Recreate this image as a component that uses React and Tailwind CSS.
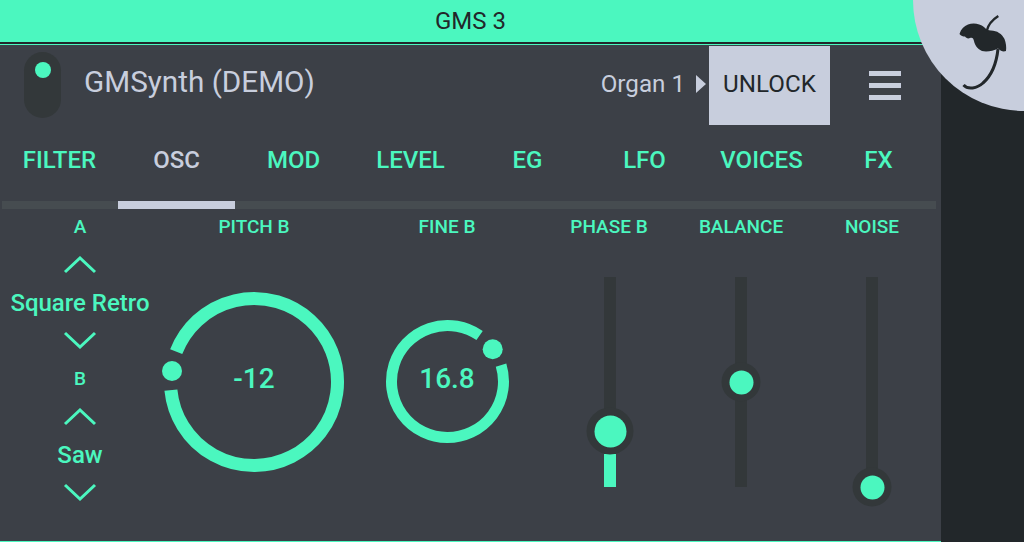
import React from 'react';

const tabs = ['FILTER', 'OSC', 'MOD', 'LEVEL', 'EG', 'LFO', 'VOICES', 'FX'];

function Chevron({ down }) {
  return (
    <svg width="34" height="18" viewBox="0 0 34 18" className="block">
      <path d={down ? 'M2 2L17 16L32 2' : 'M2 16L17 2L32 16'} fill="none" stroke="#4bf7bf" strokeWidth="3" />
    </svg>
  );
}

function Picker({ label, value }) {
  return (
    <div className="flex flex-col items-center">
      <div className="h-[24px] text-[19px] leading-[24px] font-medium">{label}</div>
      <div className="mt-[17px]"><Chevron /></div>
      <div className="mt-[13px] h-[32px] text-[24px] leading-[32px] font-medium whitespace-nowrap">{value}</div>
      <div className="mt-[12px]"><Chevron down /></div>
    </div>
  );
}

function Knob({ size, r, sw, arc, dot, value }) {
  return (
    <div className="relative" style={{ width: size, height: size }}>
      <svg width={size} height={size} viewBox={`0 0 ${size} ${size}`} className="block overflow-visible">
        <path d={arc} fill="none" stroke="#4bf7bf" strokeWidth={sw} />
        <circle cx={dot[0]} cy={dot[1]} r={r} fill="#4bf7bf" />
      </svg>
      <div className="absolute inset-0 flex items-center justify-center pb-[6px] text-[28px] font-medium">{value}</div>
    </div>
  );
}

function Slider({ pos, big, fill }) {
  const outer = big ? 'w-[47px] h-[47px]' : 'w-[39px] h-[39px]';
  const inner = big ? 'w-[32px] h-[32px]' : 'w-[24px] h-[24px]';
  return (
    <div className="relative h-[210px] w-[12px] bg-[#33383a]">
      {fill && <div className="absolute bottom-0 left-0 right-0 bg-[#4bf7bf]" style={{ height: fill }} />}
      <div
        className={`absolute left-1/2 flex -translate-x-1/2 -translate-y-1/2 items-center justify-center rounded-full bg-[#33383a] ${outer}`}
        style={{ top: pos }}
      >
        <div className={`rounded-full bg-[#4bf7bf] ${inner}`} />
      </div>
    </div>
  );
}

export default function App() {
  return (
    <div className="relative flex h-[542px] w-[1024px] overflow-hidden bg-[#22272a] font-['Roboto',sans-serif] text-[#4bf7bf]">
      <div className="flex h-full w-[941px] flex-col bg-[#3c4047]">
        <div className="flex h-[42px] items-center justify-center bg-[#4bf7bf] text-[24px] text-[#22272a]">GMS 3</div>
        <div className="h-[2px] bg-[#22272a]" />
        <div className="h-[1px] bg-[#4bf7bf]" />

        <div className="flex h-[80px] items-center">
          <div className="ml-[24px] h-[66px] w-[37px] rounded-full bg-[#33383a] pt-[10px]">
            <div className="mx-auto h-[16px] w-[16px] rounded-full bg-[#4bf7bf]" />
          </div>
          <div className="ml-[23px] pb-[6px] text-[29.7px] text-[#c8cedd]">GMSynth (DEMO)</div>
          <div className="ml-auto pb-[2px] text-[24.2px] text-[#c8cedd]">Organ 1</div>
          <div className="mb-[2px] ml-[11px] h-0 w-0 border-y-[9px] border-l-[10px] border-y-transparent border-l-[#c8cedd]" />
          <div className="ml-[3px] flex h-[79px] w-[121px] items-center justify-center self-end bg-[#c8cedd] pb-[2px] text-[24.2px] text-[#22272a]">UNLOCK</div>
          <div className="ml-[39px] mr-[40px] flex w-[32px] flex-col gap-[7px]">
            <div className="h-[5px] bg-[#c8cedd]" />
            <div className="h-[5px] bg-[#c8cedd]" />
            <div className="h-[5px] bg-[#c8cedd]" />
          </div>
        </div>

        <div className="flex h-[76px] pl-[1px]">
          {tabs.map((t) => (
            <div key={t} className={`flex w-[117px] items-center justify-center pb-[6px] text-[24px] font-medium ${t === 'OSC' ? 'text-[#c8cedd]' : ''}`}>{t}</div>
          ))}
        </div>

        <div className="ml-[2px] h-[8px] w-[934px] bg-[#464c50]">
          <div className="ml-[116px] h-full w-[117px] bg-[#c8cedd]" />
        </div>

        <div className="flex flex-1 pt-[6px] text-center">
          <div className="flex w-[160px] flex-col items-center">
            <Picker label="A" value="Square Retro" />
            <div className="mt-[18px]"><Picker label="B" value="Saw" /></div>
          </div>
          <div className="flex w-[188px] flex-col items-center">
            <div className="h-[24px] text-[19px] leading-[24px] font-medium">PITCH B</div>
            <div className="mt-[53px]">
              <Knob size={180} r={10} sw={13} arc="M6.9 98.1A83.5 83.5 0 1 0 12.2 59.7" dot={[8, 79]} value="-12" />
            </div>
          </div>
          <div className="flex w-[198px] flex-col items-center">
            <div className="h-[24px] text-[19px] leading-[24px] font-medium">FINE B</div>
            <div className="mt-[81px]">
              <Knob size={123} r={10} sw={11} arc="M93.6 15.6A56 56 0 1 0 115.05 45.1" dot={[106.7, 29.3]} value="16.8" />
            </div>
          </div>
          <div className="flex w-[128px] flex-col items-center">
            <div className="h-[24px] pr-[2px] text-[19px] leading-[24px] font-medium">PHASE B</div>
            <div className="mt-[38px]"><Slider pos={154} big fill={33} /></div>
          </div>
          <div className="flex w-[134px] flex-col items-center">
            <div className="h-[24px] text-[19px] leading-[24px] font-medium">BALANCE</div>
            <div className="mt-[38px]"><Slider pos={105} /></div>
          </div>
          <div className="flex w-[128px] flex-col items-center">
            <div className="h-[24px] text-[19px] leading-[24px] font-medium">NOISE</div>
            <div className="mt-[38px]"><Slider pos={210} /></div>
          </div>
        </div>
        <div className="h-[1px] bg-[#4bf7bf]" />
      </div>

      <div className="absolute -right-[111px] -top-[111px] h-[222px] w-[222px] rounded-full bg-[#c8cedd]" />
      <svg className="absolute left-[880px] top-0" width="144" height="130" viewBox="0 0 144 130">
        <path
          d="M79.5 34C81 29 84 26 88 24.5C93 22.5 100 23.5 104 27C106 29 108 30.5 111 30.5C117 30.5 122 34 124.5 39C126 43 126.5 47 126 51C123 52 121 51 118 48.5C113 51 107 52 102 51C97 49 94.5 44 94 41C93.5 38 92 37 90 38C88 39 86 38 85 36.5C83 36.5 81 36 79.5 34Z"
          fill="#22272a"
        />
        <path d="M106.7 31C108 25 112 20 118.3 16" fill="none" stroke="#22272a" strokeWidth="2.4" />
        <path d="M118 49C116.5 63 111 76 103 83C97 88.5 88 90 83.5 85" fill="none" stroke="#22272a" strokeWidth="3" />
      </svg>
    </div>
  );
}
